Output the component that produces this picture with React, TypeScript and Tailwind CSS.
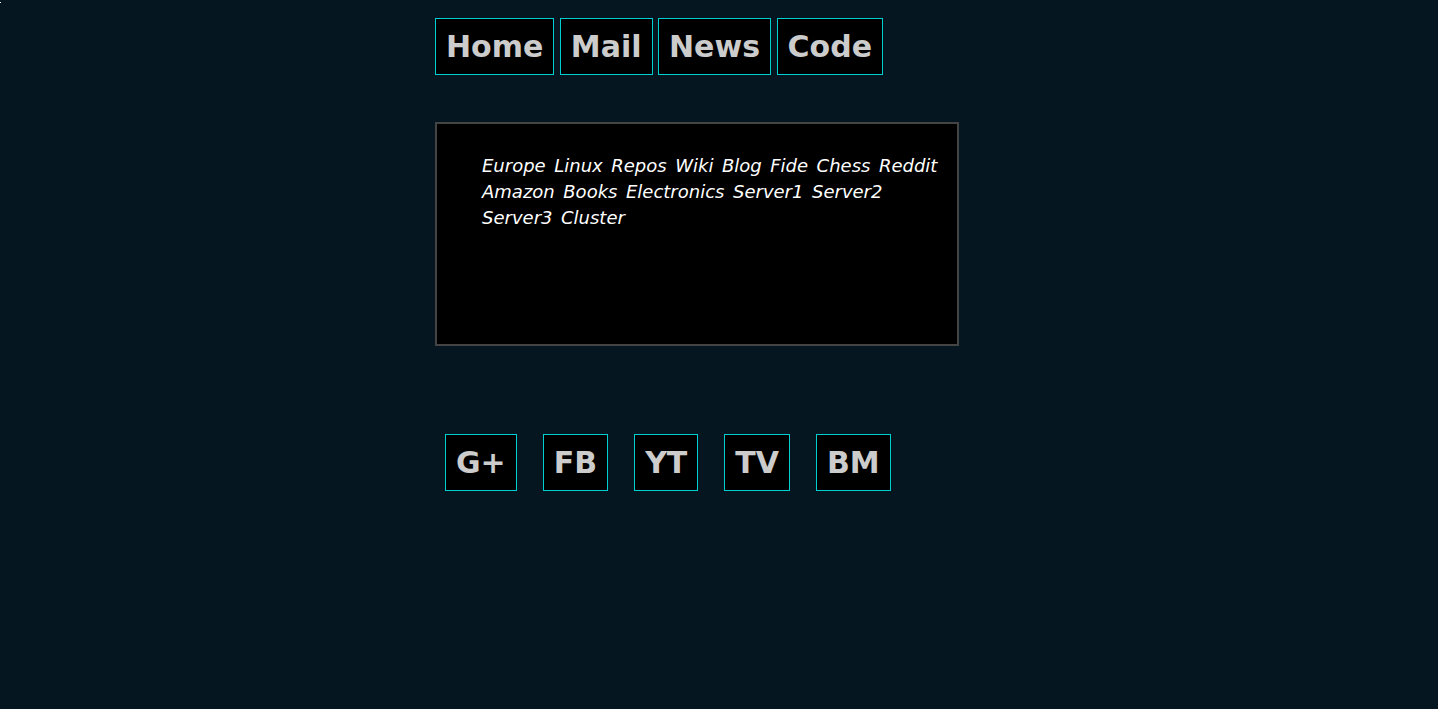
import React from "react";

const top = ["Home", "Mail", "News", "Code"];
const bottom = ["G+", "FB", "YT", "TV", "BM"];
const links = [
  "Europe", "Linux", "Repos", "Wiki", "Blog", "Fide", "Chess", "Reddit",
  "Amazon", "Books", "Electronics", "Server1", "Server2", "Server3", "Cluster",
];

export default function App() {
  return (
    <div
      className="relative min-h-[709px] w-full bg-[#061620] pt-[18px]"
      style={{ fontFamily: '"DejaVu Sans", sans-serif' }}
    >
      <div className="absolute left-0 top-[2px] h-px w-px bg-white" />
      <nav className="flex gap-[5.5px] pl-[435px]">
        {top.map((t) => (
          <a
            key={t}
            className="block border border-[#00ced1] bg-black px-[10px] py-[10px] text-[30px] font-bold leading-[normal] text-[#cccccc]"
          >
            {t}
          </a>
        ))}
      </nav>
      <div className="ml-[435px] mt-[47px] h-[224px] w-[524px] border-2 border-[#444444] bg-black pl-[45px] pt-[29px]">
        <div className="w-[465px] text-[18px] italic leading-[26px] text-white [word-spacing:2.8px]">
          {links.join(" ")}
        </div>
      </div>
      <div className="mt-[88px] flex gap-[26px] pl-[445px]">
        {bottom.map((t) => (
          <a
            key={t}
            className="block border border-[#00ced1] bg-black px-[10px] py-[10px] text-[30px] font-bold leading-[normal] text-[#cccccc]"
          >
            {t}
          </a>
        ))}
      </div>
    </div>
  );
}
